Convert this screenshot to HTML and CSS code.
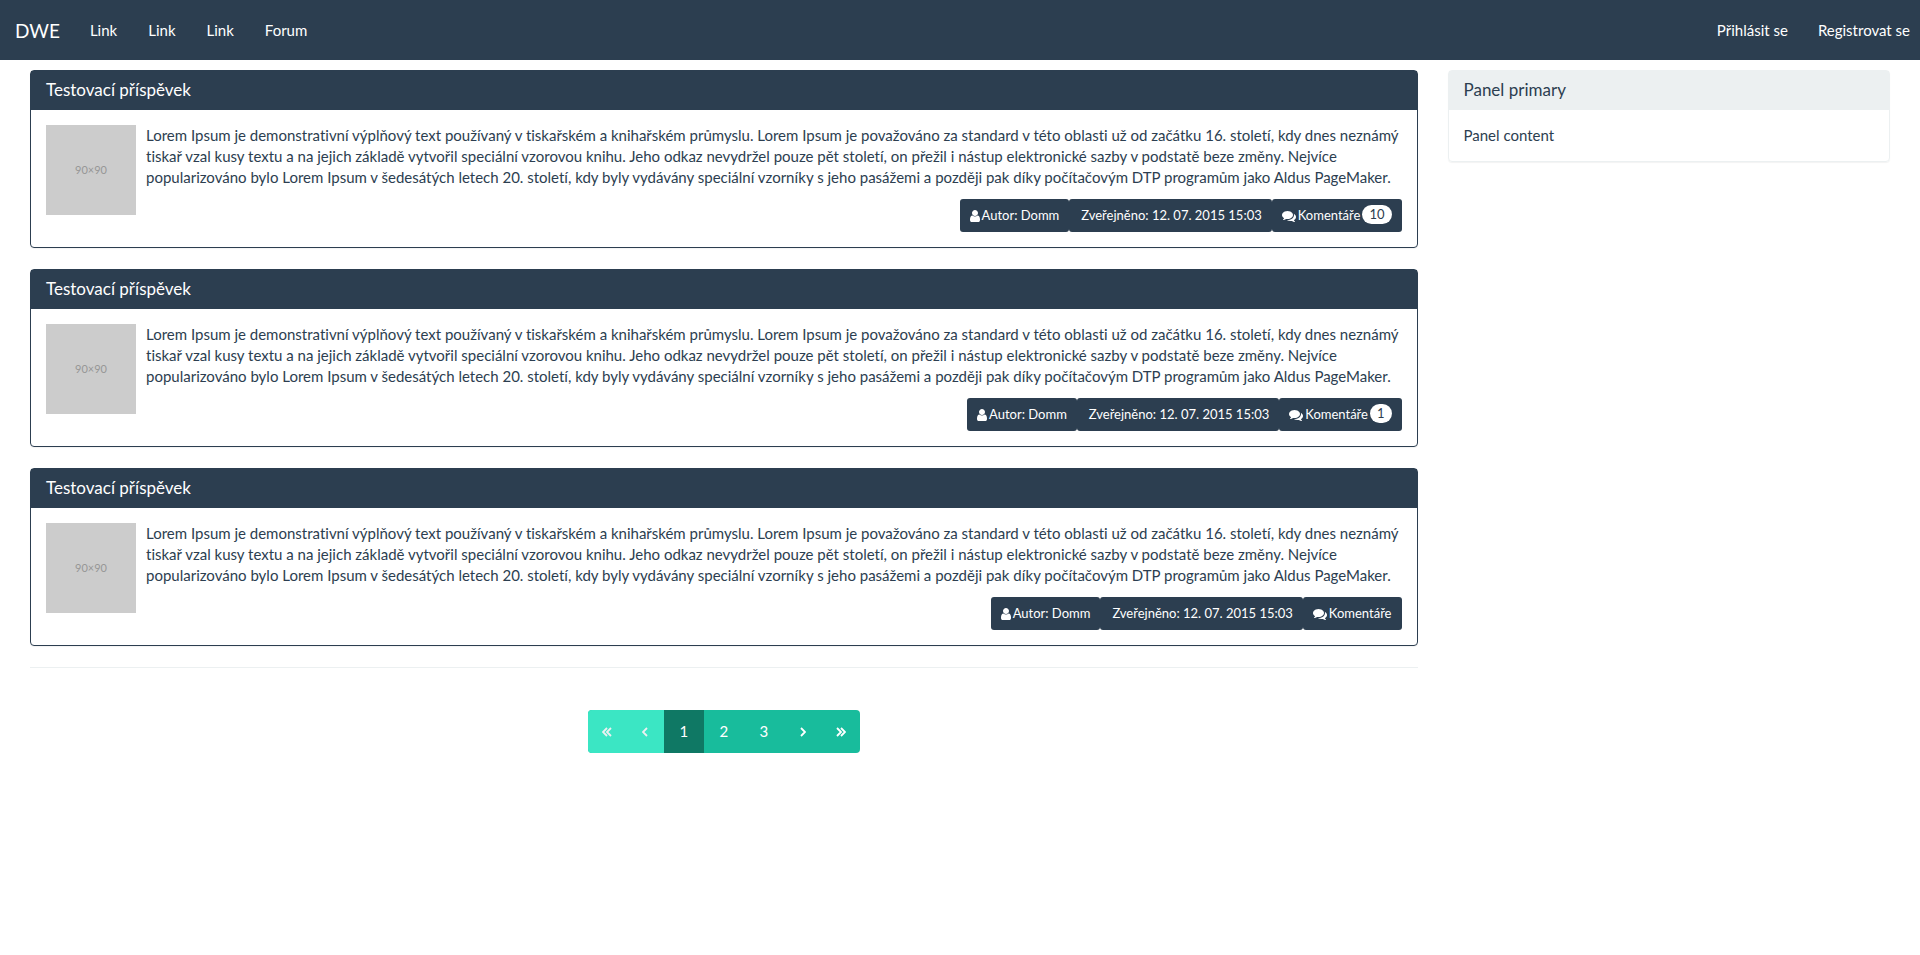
FILE: index.html
```html
<!DOCTYPE html>
<html lang="cs">
<head>
<meta charset="utf-8">
<meta name="viewport" content="width=device-width, initial-scale=1">
<title>DWE</title>
<link rel="stylesheet" href="styles.css">
</head>
<body>
<svg class="sprite" aria-hidden="true">
  <symbol id="user" viewBox="256 0 1280 1792"><path d="M1536 1399q0 109-62.5 187t-150.5 78h-854q-88 0-150.5-78t-62.5-187q0-85 8.5-160.5t31.5-152 58.5-131 94-89 134.5-34.5q131 128 313 128t313-128q76 0 134.5 34.5t94 89 58.5 131 31.5 152 8.5 160.5zm-256-887q0 159-112.5 271.5t-271.5 112.5-271.5-112.5-112.5-271.5 112.5-271.5 271.5-112.5 271.5 112.5 112.5 271.5z"/></symbol>
  <symbol id="comments" viewBox="0 0 1792 1792"><path d="M1408 768q0 139-94 257t-256.5 186.5-353.5 68.5q-86 0-176-16-124 88-278 128-36 9-86 16h-3q-11 0-20.5-8t-11.5-21q-1-3-1-6.5t.5-6.5 2-6l2.5-5 3.5-5.5 4-5 4.5-5 4-4.5q5-6 23-25t26-29.5 22.5-29 25-38.5 20.5-44q-124-72-195-177t-71-224q0-139 94-257t256.5-186.5 353.5-68.5 353.5 68.5 256.5 186.5 94 257zm384 256q0 120-71 224.5t-195 176.5q10 24 20.5 44t25 38.5 22.5 29 26 29.5 23 25q1 1 4 4.5t4.5 5 4 5 3.5 5.5l2.5 5 2 6 .5 6.5-1 6.5q-3 14-13 22t-22 7q-50-7-86-16-154-40-278-128-90 16-176 16-271 0-472-132 58 4 88 4 161 0 309-45t264-129q125-92 192-212t67-254q0-77-23-152 129 71 204 178t75 230z"/></symbol>
  <symbol id="angle" viewBox="0 0 6 10"><path class="stroke" d="M1 1l4 4-4 4"/></symbol>
  <symbol id="angles" viewBox="0 0 10 10"><path class="stroke" d="M1 1l4 4-4 4M5 1l4 4-4 4"/></symbol>
</svg>
<nav class="navbar">
  <a class="brand" href="#">DWE</a>
  <ul class="nav">
    <li><a href="#">Link</a></li>
    <li><a href="#">Link</a></li>
    <li><a href="#">Link</a></li>
    <li><a href="#">Forum</a></li>
  </ul>
  <ul class="nav nav-right">
    <li><a href="#">Přihlásit se</a></li>
    <li><a href="#">Registrovat se</a></li>
  </ul>
</nav>
<div class="row">
  <main class="posts">
    <article class="panel panel-primary">
      <h3 class="panel-heading">Testovací příspěvek</h3>
      <div class="panel-body">
        <div class="thumb">90×90</div>
        <div class="content">
          <p>Lorem Ipsum je demonstrativní výplňový text používaný v tiskařském a knihařském průmyslu. Lorem Ipsum je považováno za standard v této oblasti už od začátku 16. století, kdy dnes neznámý tiskař vzal kusy textu a na jejich základě vytvořil speciální vzorovou knihu. Jeho odkaz nevydržel pouze pět století, on přežil i nástup elektronické sazby v podstatě beze změny. Nejvíce popularizováno bylo Lorem Ipsum v šedesátých letech 20. století, kdy byly vydávány speciální vzorníky s jeho pasážemi a později pak díky počítačovým DTP programům jako Aldus PageMaker.</p>
          <div class="meta">
            <a class="btn" href="#"><svg class="icon-user"><use href="#user"/></svg>Autor: Domm</a>
            <a class="btn btn-date" href="#">Zveřejněno: 12. 07. 2015 15:03</a>
            <a class="btn" href="#"><svg class="icon-comments"><use href="#comments"/></svg>Komentáře<span class="badge">10</span></a>
          </div>
        </div>
      </div>
    </article>
    <article class="panel panel-primary">
      <h3 class="panel-heading">Testovací příspěvek</h3>
      <div class="panel-body">
        <div class="thumb">90×90</div>
        <div class="content">
          <p>Lorem Ipsum je demonstrativní výplňový text používaný v tiskařském a knihařském průmyslu. Lorem Ipsum je považováno za standard v této oblasti už od začátku 16. století, kdy dnes neznámý tiskař vzal kusy textu a na jejich základě vytvořil speciální vzorovou knihu. Jeho odkaz nevydržel pouze pět století, on přežil i nástup elektronické sazby v podstatě beze změny. Nejvíce popularizováno bylo Lorem Ipsum v šedesátých letech 20. století, kdy byly vydávány speciální vzorníky s jeho pasážemi a později pak díky počítačovým DTP programům jako Aldus PageMaker.</p>
          <div class="meta">
            <a class="btn" href="#"><svg class="icon-user"><use href="#user"/></svg>Autor: Domm</a>
            <a class="btn btn-date" href="#">Zveřejněno: 12. 07. 2015 15:03</a>
            <a class="btn" href="#"><svg class="icon-comments"><use href="#comments"/></svg>Komentáře<span class="badge">1</span></a>
          </div>
        </div>
      </div>
    </article>
    <article class="panel panel-primary">
      <h3 class="panel-heading">Testovací příspěvek</h3>
      <div class="panel-body">
        <div class="thumb">90×90</div>
        <div class="content">
          <p>Lorem Ipsum je demonstrativní výplňový text používaný v tiskařském a knihařském průmyslu. Lorem Ipsum je považováno za standard v této oblasti už od začátku 16. století, kdy dnes neznámý tiskař vzal kusy textu a na jejich základě vytvořil speciální vzorovou knihu. Jeho odkaz nevydržel pouze pět století, on přežil i nástup elektronické sazby v podstatě beze změny. Nejvíce popularizováno bylo Lorem Ipsum v šedesátých letech 20. století, kdy byly vydávány speciální vzorníky s jeho pasážemi a později pak díky počítačovým DTP programům jako Aldus PageMaker.</p>
          <div class="meta">
            <a class="btn" href="#"><svg class="icon-user"><use href="#user"/></svg>Autor: Domm</a>
            <a class="btn btn-date" href="#">Zveřejněno: 12. 07. 2015 15:03</a>
            <a class="btn" href="#"><svg class="icon-comments"><use href="#comments"/></svg>Komentáře</a>
          </div>
        </div>
      </div>
    </article>
    <hr class="divider">
    <ul class="pagination">
      <li class="disabled"><a class="arrow" href="#" aria-label="První"><svg class="angles flip"><use href="#angles"/></svg></a></li>
      <li class="disabled"><a class="arrow" href="#" aria-label="Předchozí"><svg class="angle flip"><use href="#angle"/></svg></a></li>
      <li class="active"><a href="#">1</a></li>
      <li><a href="#">2</a></li>
      <li><a href="#">3</a></li>
      <li><a class="arrow" href="#" aria-label="Další"><svg class="angle"><use href="#angle"/></svg></a></li>
      <li><a class="arrow" href="#" aria-label="Poslední"><svg class="angles"><use href="#angles"/></svg></a></li>
    </ul>
  </main>
  <aside class="sidebar">
    <section class="panel">
      <h3 class="panel-heading">Panel primary</h3>
      <div class="panel-body">Panel content</div>
    </section>
  </aside>
</div>
</body>
</html>
```
FILE: styles.css
```css
* { box-sizing: border-box; }
body {
  margin: 0;
  background: #fff;
  color: #2c3e50;
  font: 15px/21px Lato, "Liberation Sans", sans-serif;
  font-variant-ligatures: none;
}
a { color: inherit; text-decoration: none; }
ul { list-style: none; margin: 0; padding: 0; }
svg { fill: currentColor; }
.sprite { display: none; }
.stroke { fill: none; stroke: currentColor; stroke-width: 1.8; }

.navbar {
  display: flex;
  align-items: center;
  height: 60px;
  margin-bottom: 10px;
  background: #2c3e50;
  color: #fff;
}
.brand { padding: 0 15px; font-size: 19px; }
.nav { display: flex; gap: 1px; }
.nav a { display: block; padding: 20px 15px 19px; }
.nav-right { margin-left: auto; padding-right: 10px; gap: 30px; }
.nav-right a { padding-left: 0; padding-right: 0; }

.row {
  display: grid;
  grid-template-columns: 3fr 1fr;
  padding: 0 15px;
}
.posts, .sidebar { min-width: 0; padding: 0 15px; }

.panel {
  margin-bottom: 21px;
  border: 1px solid #ecf0f1;
  border-radius: 4px;
  box-shadow: 0 1px 1px rgba(0, 0, 0, .05);
}
.panel-heading {
  margin: 0;
  padding: 9px 15px 11px;
  background: #ecf0f1;
  font-size: 17px;
  font-weight: 400;
  line-height: 19px;
}
.panel-body { display: flex; gap: 10px; padding: 15px; }
.panel-primary { border-color: #2c3e50; }
.panel-primary .panel-heading { background: #2c3e50; color: #fff; }
.thumb {
  display: flex;
  align-items: center;
  justify-content: center;
  flex: none;
  width: 90px;
  height: 90px;
  background: #ccc;
  color: #969696;
  font-size: 11px;
  line-height: 12px;
}
.content { flex: 1; min-width: 0; }
.content p { margin: 0 0 11px; }

.meta { display: flex; justify-content: flex-end; }
.btn {
  display: flex;
  align-items: center;
  gap: 2px;
  height: 33px;
  padding: 0 10px;
  border-radius: 3px;
  background: #2c3e50;
  color: #fff;
  font-size: 13px;
}
.btn-date { padding-left: 12px; }
.icon-user { width: 10px; height: 14px; }
.icon-comments { width: 14px; height: 14px; }
.badge {
  margin-bottom: 2px;
  padding: 3px 7px;
  border-radius: 10px;
  background: #fff;
  color: #2c3e50;
  line-height: 13px;
}

.divider { margin: 21px 0; border: 0; border-top: 1px solid #ecf0f1; }
.pagination {
  display: flex;
  width: max-content;
  margin: 42px auto 21px;
  overflow: hidden;
  border-radius: 4px;
  background: #18bc9c;
  color: #fff;
}
.pagination a {
  display: flex;
  align-items: center;
  justify-content: center;
  width: 40px;
  height: 43px;
}
.pagination .arrow { width: 38px; }
.pagination .active { background: #0f7864; }
.pagination .disabled { background: #3be6c4; color: #ecf0f1; }
.angle { width: 6px; height: 10px; }
.angles { width: 10px; height: 10px; }
.flip { transform: scaleX(-1); }
```
